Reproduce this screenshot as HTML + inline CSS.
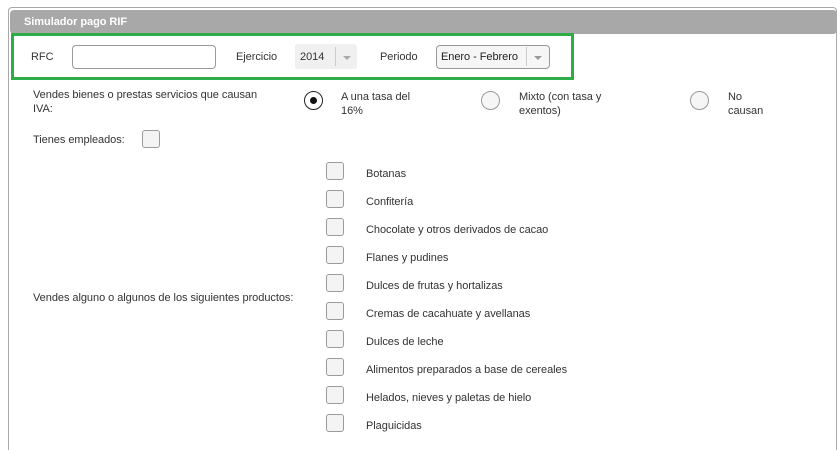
<!DOCTYPE html>
<html style="height:450px;overflow:hidden"><head><style>
body{margin:0;width:840px;height:450px;background:#fff;font-family:"Liberation Sans",Arial,sans-serif;font-size:11px;color:#333;position:relative;overflow:hidden;letter-spacing:-0.05px}
.a{position:absolute}
.frame{left:8px;top:7px;width:829px;height:443px;border:1px solid #a9a9a9;border-bottom:none;border-radius:4px 4px 0 0;box-sizing:border-box}
.hdr{left:10px;top:10px;width:827px;height:24px;background:#a8a8a8;border-radius:4px;color:#fff;font-weight:bold;font-size:11px;line-height:25px}
.green{left:11px;top:33px;width:557px;height:41px;border:3px solid #2eac48}
.cb{width:16px;height:16px;border:1px solid #9a9a9a;border-radius:3px;background:#f4f4f4}
.rd{width:17px;height:17px;border:1px solid #999;border-radius:50%;background:#f6f6f6}
.lab{line-height:14px}
</style></head><body>
<div class="a frame"></div>
<div class="a hdr"><span style="padding-left:14px">Simulador pago RIF</span></div>
<div class="a green"></div>
<div class="a" style="left:31px;top:51px">RFC</div>
<div class="a" style="left:72px;top:45px;width:142px;height:22px;border:1px solid #999;border-radius:4px;background:#fff"></div>
<div class="a" style="left:236px;top:51px">Ejercicio</div>
<div class="a" style="left:295px;top:44px;width:62px;height:25px;background:#f0f0f0;border-radius:3px"></div>
<div class="a" style="left:300px;top:51px">2014</div>
<div class="a" style="left:335px;top:47px;width:1px;height:19px;background:#ccc"></div>
<div class="a" style="left:343px;top:56px;border-left:4px solid transparent;border-right:4px solid transparent;border-top:4px solid #aaa"></div>
<div class="a" style="left:380px;top:51px">Periodo</div>
<div class="a" style="left:436px;top:45px;width:112px;height:22px;border:1px solid #999;border-radius:4px;background:#f6f6f6"></div>
<div class="a" style="left:441px;top:51px;color:#222">Enero - Febrero</div>
<div class="a" style="left:526px;top:47px;width:1px;height:19px;background:#ccc"></div>
<div class="a" style="left:534px;top:56px;border-left:4px solid transparent;border-right:4px solid transparent;border-top:4px solid #999"></div>
<div class="a lab" style="left:33px;top:88px;width:240px">Vendes bienes o prestas servicios que causan IVA:</div>
<div class="a rd" style="left:304px;top:91px;border-color:#222;background:#fff"></div>
<div class="a" style="left:310px;top:97px;width:7px;height:7px;border-radius:50%;background:#111"></div>
<div class="a lab" style="left:341px;top:90px">A una tasa del<br>16%</div>
<div class="a rd" style="left:481px;top:91px"></div>
<div class="a lab" style="left:519px;top:90px">Mixto (con tasa y<br>exentos)</div>
<div class="a rd" style="left:690px;top:91px"></div>
<div class="a lab" style="left:728px;top:90px">No<br>causan</div>
<div class="a" style="left:33px;top:134px">Tienes empleados:</div>
<div class="a cb" style="left:142px;top:130px"></div>
<div class="a" style="left:33px;top:292px">Vendes alguno o algunos de los siguientes productos:</div>
<div class="a cb" style="left:326px;top:162px"></div><div class="a" style="left:366px;top:168px">Botanas</div>
<div class="a cb" style="left:326px;top:190px"></div><div class="a" style="left:366px;top:196px">Confitería</div>
<div class="a cb" style="left:326px;top:218px"></div><div class="a" style="left:366px;top:224px">Chocolate y otros derivados de cacao</div>
<div class="a cb" style="left:326px;top:246px"></div><div class="a" style="left:366px;top:252px">Flanes y pudines</div>
<div class="a cb" style="left:326px;top:274px"></div><div class="a" style="left:366px;top:280px">Dulces de frutas y hortalizas</div>
<div class="a cb" style="left:326px;top:302px"></div><div class="a" style="left:366px;top:308px">Cremas de cacahuate y avellanas</div>
<div class="a cb" style="left:326px;top:330px"></div><div class="a" style="left:366px;top:336px">Dulces de leche</div>
<div class="a cb" style="left:326px;top:358px"></div><div class="a" style="left:366px;top:364px">Alimentos preparados a base de cereales</div>
<div class="a cb" style="left:326px;top:386px"></div><div class="a" style="left:366px;top:392px">Helados, nieves y paletas de hielo</div>
<div class="a cb" style="left:326px;top:414px"></div><div class="a" style="left:366px;top:420px">Plaguicidas</div>
</body></html>
